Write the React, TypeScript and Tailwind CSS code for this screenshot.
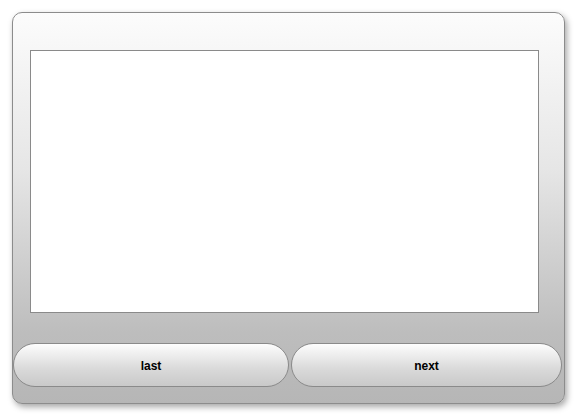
export default function App() {
  return (
    <main className="h-[417px] w-[577px] bg-white pl-3 pt-3 font-['Liberation_Sans',Arial,sans-serif]">
      <div className="flex h-[392px] w-[553px] flex-col rounded-[10px] border border-[#8c8c8c] bg-[linear-gradient(to_bottom,#fcfcfc_0%,#e6e6e6_40%,#bdbdbd_82%,#b6b6b6_100%)] shadow-[2px_3px_6px_rgba(0,0,0,0.35)]">
        <div className="ml-[17px] mt-[37px] h-[263px] w-[509px] border border-[#8a8a8a] bg-white" />
        <div className="mt-[30px] flex gap-[2px] pr-[2px]">
          <button className="h-[44px] w-[276px] rounded-full border border-[#8a8a8a] bg-[linear-gradient(to_bottom,#fdfdfd,#d9d9d9_60%,#c9c9c9)] pt-[2px] text-[12px] font-bold text-black">
            last
          </button>
          <button className="h-[44px] flex-1 rounded-full border border-[#8a8a8a] bg-[linear-gradient(to_bottom,#fdfdfd,#d9d9d9_60%,#c9c9c9)] pt-[2px] text-[12px] font-bold text-black">
            next
          </button>
        </div>
      </div>
    </main>
  );
}
